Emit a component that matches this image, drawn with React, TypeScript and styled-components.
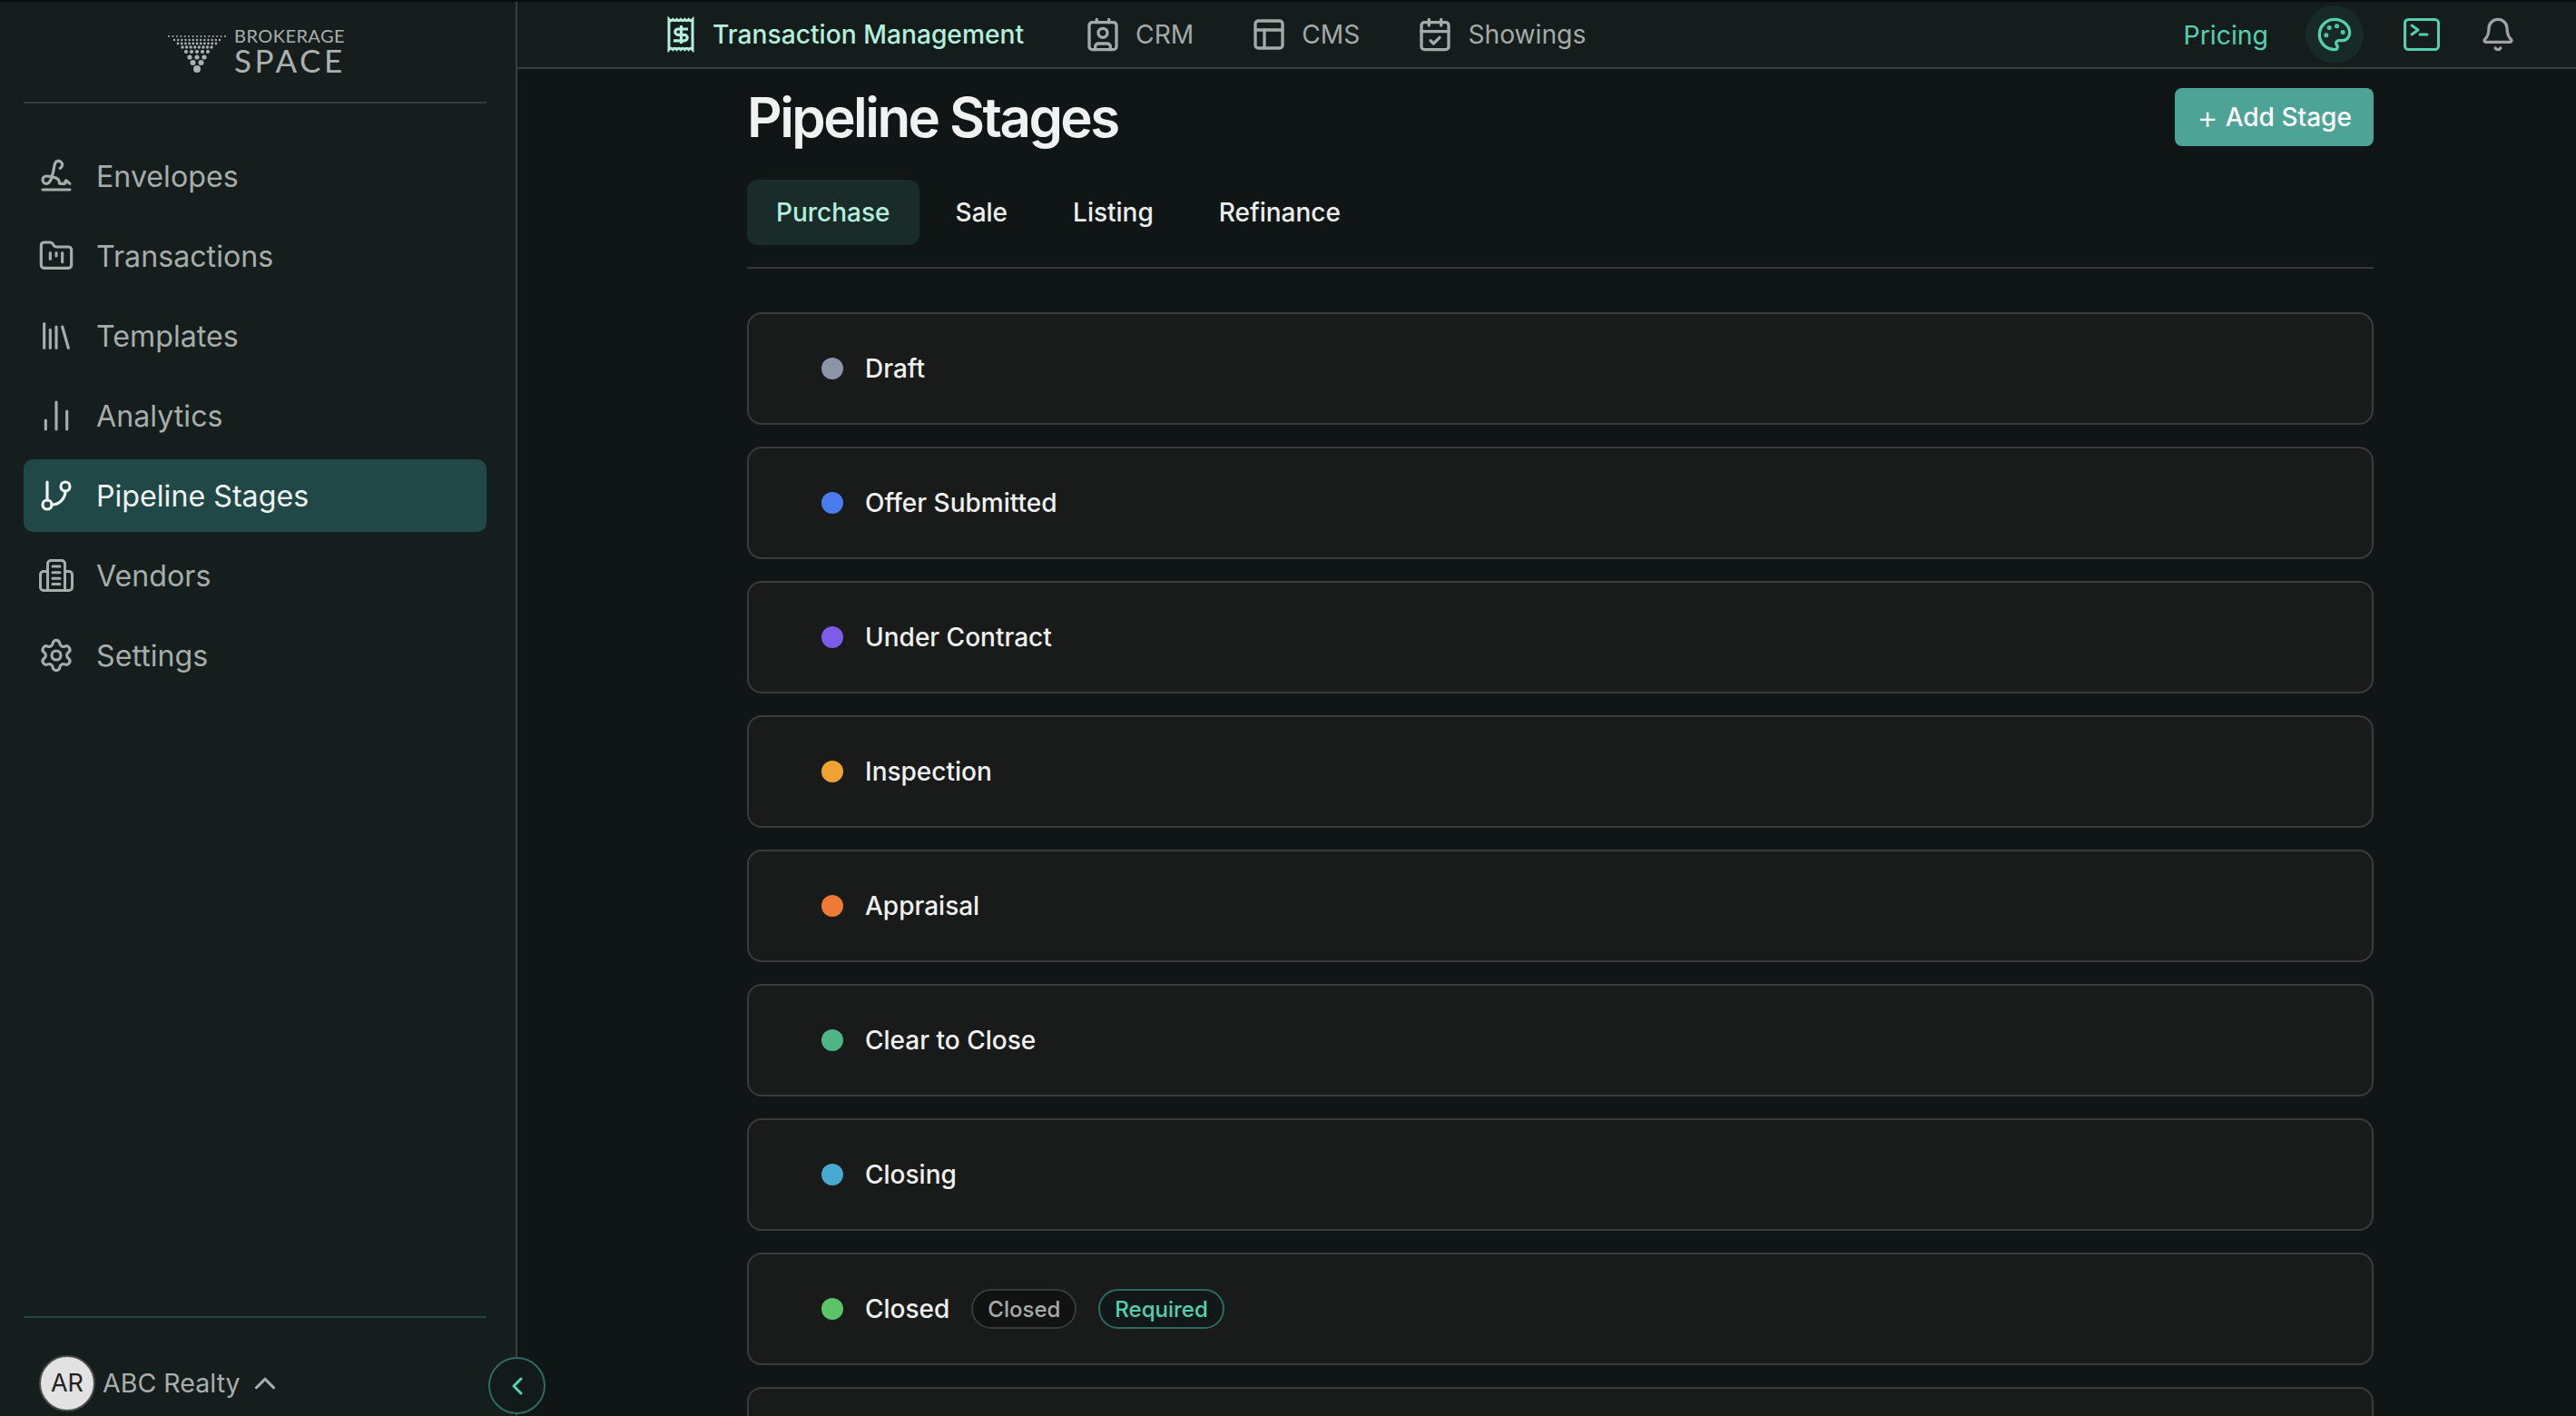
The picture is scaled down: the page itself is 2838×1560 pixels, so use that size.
import React from 'react';
import styled, { createGlobalStyle } from 'styled-components';
import {
  Signature, FolderKanban, Library, ChartNoAxesColumn, GitBranch, Settings,
  Contact, PanelsTopLeft, CalendarCheck, Palette, Bell, ChevronUp, ChevronLeft,
} from 'lucide-react';

const GlobalStyle = createGlobalStyle`
  html, body { margin: 0; padding: 0; height: 100%; background: #101616; }
  body { font-family: Inter, "Noto Sans", sans-serif; overflow: hidden; }
`;

const Shell = styled.div`
  display: flex;
  height: 100vh;
  padding-top: 2px;
  box-sizing: border-box;
  background: #0a0d0d;
  overflow: hidden;
`;

const Sidebar = styled.aside`
  position: relative;
  width: 570px;
  flex: none;
  box-sizing: border-box;
  display: flex;
  flex-direction: column;
  background: #151d1d;
  border-right: 2px solid #3a3d3d;
`;

const LogoRow = styled.div`
  height: 112px;
  margin: 0 32px 0 26px;
  box-sizing: border-box;
  border-bottom: 2px solid #383c3c;
  display: flex;
  align-items: flex-start;
  padding: 27px 0 0 159px;
  gap: 9px;
`;

const LogoWords = styled.div`
  display: flex;
  flex-direction: column;
  color: #aab1af;
  font-family: Lato, sans-serif;
  font-weight: 400;
`;

const LogoTop = styled.span`
  font-size: 20px;
  line-height: 21px;
  letter-spacing: 0.45px;
`;

const LogoBottom = styled.span`
  font-size: 35px;
  line-height: 32px;
  letter-spacing: 3.6px;
  white-space: nowrap;
`;

const Nav = styled.nav`
  flex: 1;
  display: flex;
  flex-direction: column;
  gap: 8px;
  margin: 40px 32px 0 26px;
`;

const NavItem = styled.div<{ $active?: boolean }>`
  height: 80px;
  display: flex;
  align-items: center;
  gap: 24px;
  padding-left: 16px;
  border-radius: 10px;
  font-size: 32.2px;
  color: ${(p) => (p.$active ? '#eff3f2' : '#a6adab')};
  background: ${(p) => (p.$active ? '#204846' : 'transparent')};
  svg { flex: none; }
`;

const SideFooter = styled.div`
  height: 110px;
  margin: 0 32px 0 26px;
  box-sizing: border-box;
  border-top: 2px solid #23483f;
  display: flex;
  align-items: center;
  padding: 35px 0 0 17px;
  gap: 8px;
  color: #a9adac;
  font-size: 28.6px;
`;

const Avatar = styled.div`
  width: 62px;
  height: 62px;
  flex: none;
  box-sizing: border-box;
  border-radius: 50%;
  background: #e2e2e2;
  border: 2px solid #4a4d4d;
  color: #222;
  font-size: 27px;
  display: flex;
  align-items: center;
  justify-content: center;
`;

const CollapseButton = styled.div`
  position: absolute;
  right: -33px;
  bottom: 2px;
  width: 63px;
  height: 63px;
  box-sizing: border-box;
  border-radius: 50%;
  background: #121a1a;
  border: 2px solid #2e6a60;
  color: #52d6b2;
  display: flex;
  align-items: center;
  justify-content: center;
  z-index: 2;
`;

const Main = styled.div`
  flex: 1;
  min-width: 0;
  display: flex;
  flex-direction: column;
`;

const TopBar = styled.header`
  height: 74px;
  flex: none;
  box-sizing: border-box;
  display: flex;
  align-items: center;
  background: #151c1c;
  border-bottom: 2px solid #3a3d3d;
  padding: 0 66px 0 160px;
`;

const TopItem = styled.div<{ $active?: boolean }>`
  display: flex;
  align-items: center;
  gap: ${(p) => (p.$active ? 15 : 16)}px;
  margin-right: ${(p) => (p.$active ? 67 : 63)}px;
  font-size: 28.2px;
  font-weight: ${(p) => (p.$active ? 500 : 400)};
  color: ${(p) => (p.$active ? '#b4efdc' : '#a3aaa8')};
`;

const TopRight = styled.div`
  margin-left: auto;
  display: flex;
  align-items: center;
`;

const PricingLink = styled.span`
  color: #55d0ae;
  font-size: 28.4px;
  margin-right: 41px;
`;

const PaletteButton = styled.div`
  width: 64px;
  height: 64px;
  border-radius: 50%;
  background: #172a28;
  color: #55d0ae;
  display: flex;
  align-items: center;
  justify-content: center;
  margin-right: 44px;
`;

const TerminalWrap = styled.div`
  display: flex;
  color: #55d0ae;
`;

const BellWrap = styled.div`
  display: flex;
  margin-left: 44px;
  color: #a0a1a6;
`;

const Content = styled.main`
  flex: 1;
  min-height: 0;
  overflow: hidden;
  padding: 21px 223px 0 253px;
  background: #101616;
`;

const HeaderRow = styled.div`
  display: flex;
  align-items: center;
  justify-content: space-between;
  height: 64px;
`;

const Title = styled.h1`
  margin: 0;
  font-size: 60px;
  font-weight: 600;
  letter-spacing: -2.55px;
  color: #f0f2f2;
`;

const AddButton = styled.button`
  width: 219px;
  height: 64px;
  border: none;
  border-radius: 8px;
  background: #4da396;
  color: #fff;
  font-family: inherit;
  font-size: 28px;
  font-weight: 500;
  display: flex;
  align-items: center;
  justify-content: center;
  gap: 8px;
  padding: 0;
`;

const PlusSign = styled.span`
  font-size: 36px;
  font-weight: 300;
  line-height: 36px;
`;

const Tabs = styled.div`
  display: flex;
  gap: 8px;
  margin-top: 37px;
  padding-bottom: 24px;
  border-bottom: 2px solid #363939;
`;

const Tab = styled.div<{ $active?: boolean }>`
  height: 72px;
  padding: 0 32px;
  display: flex;
  align-items: center;
  border-radius: 12px;
  font-size: 28px;
  font-weight: 450;
  color: ${(p) => (p.$active ? '#b4efdc' : '#eceeee')};
  background: ${(p) => (p.$active ? '#1a2c2a' : 'transparent')};
`;

const StageList = styled.div`
  display: flex;
  flex-direction: column;
  gap: 24px;
  margin-top: 48px;
`;

const StageCard = styled.div`
  height: 124px;
  flex: none;
  box-sizing: border-box;
  display: flex;
  align-items: center;
  padding-left: 80px;
  background: #191a1a;
  border: 2px solid #3a3c3c;
  border-radius: 16px;
`;

const Dot = styled.span<{ $color: string }>`
  width: 24px;
  height: 24px;
  flex: none;
  border-radius: 50%;
  background: ${(p) => p.$color};
  margin-right: 24px;
`;

const StageName = styled.span`
  font-size: 28px;
  font-weight: 450;
  color: #eff1f1;
`;

const Badge = styled.span<{ $teal?: boolean }>`
  height: 44px;
  box-sizing: border-box;
  display: inline-flex;
  align-items: center;
  padding: 0 16px;
  margin-left: 24px;
  border-radius: 22px;
  font-size: 24px;
  font-weight: 500;
  background: ${(p) => (p.$teal ? '#121818' : '#111313')};
  color: ${(p) => (p.$teal ? '#55d0ae' : '#a8abaa')};
  border: 2px solid ${(p) => (p.$teal ? '#2e6a60' : '#383a3a')};
`;

const BrokerageMark = () => {
  const rows = [
    { y: 3, n: 15, w: 31, r: 1 },
    { y: 7, n: 13, w: 25, r: 1.2 },
    { y: 11, n: 11, w: 21, r: 1.4 },
    { y: 15, n: 8, w: 16, r: 1.7 },
    { y: 20, n: 5, w: 12, r: 2.1 },
    { y: 26, n: 3, w: 8, r: 2.6 },
    { y: 32, n: 2, w: 4.5, r: 3 },
    { y: 39, n: 1, w: 0, r: 4 },
  ];
  const dots: React.ReactNode[] = [];
  rows.forEach((row) => {
    for (let i = 0; i < row.n; i++) {
      const x = row.n === 1 ? 32 : 32 - row.w + (2 * row.w * i) / (row.n - 1);
      dots.push(<circle key={`${row.y}-${i}`} cx={x} cy={row.y} r={row.r} />);
    }
  });
  return (
    <svg width="64" height="44" viewBox="0 0 64 44" fill="#aab1af" style={{ marginTop: 8 }}>
      {dots}
    </svg>
  );
};

const ReceiptIcon = () => (
  <svg width="40" height="40" viewBox="0 0 40 40" fill="none" stroke="currentColor" strokeWidth="3">
    <path d="M7 3.5 q2 2.4 4.3 0 q2 2.4 4.3 0 q2.2 2.4 4.4 0 q2.2 2.4 4.4 0 q2.2 2.4 4.3 0 q2 2.4 4.3 0 V36.5 q-2 -2.4 -4.3 0 q-2.1 -2.4 -4.3 0 q-2.2 -2.4 -4.4 0 q-2.2 -2.4 -4.4 0 q-2.2 -2.4 -4.3 0 q-2.3 -2.4 -4.3 0 Z" />
    <path d="M28 14 h-11 a3.2 3.2 0 0 0 0 6.4 h7 a3.2 3.2 0 0 1 0 6.4 h-12 M20.5 10 v20" strokeWidth="3.2" />
  </svg>
);

const TerminalIcon = () => (
  <svg width="40" height="36" viewBox="0 0 40 36" fill="none" stroke="currentColor" strokeWidth="3" strokeLinecap="round" strokeLinejoin="round">
    <rect x="1.5" y="1.5" width="37" height="33" rx="4" />
    <path d="M9 8 l7 5 l-7 5 M18 18 h8" />
  </svg>
);

const VendorsIcon = () => (
  <svg width="40" height="40" viewBox="0 0 40 40" fill="none" stroke="currentColor" strokeWidth="3" strokeLinecap="round" strokeLinejoin="round">
    <path d="M10.5 36.5 V7 a3.5 3.5 0 0 1 3.5 -3.5 h12 a3.5 3.5 0 0 1 3.5 3.5 V36.5" />
    <path d="M10.5 15.5 H6 a3.5 3.5 0 0 0 -3.5 3.5 V33 A3.5 3.5 0 0 0 6 36.5 H34 a3.5 3.5 0 0 0 3.5 -3.5 V19 A3.5 3.5 0 0 0 34 15.5 H29.5" />
    <path d="M16 10 h8 M16 16.7 h8 M16 23.3 h8 M16 29.5 h8" />
  </svg>
);

const sideItems = [
  { label: 'Envelopes', icon: <Signature size={40} strokeWidth={1.9} /> },
  { label: 'Transactions', icon: <FolderKanban size={40} strokeWidth={1.9} /> },
  { label: 'Templates', icon: <Library size={40} strokeWidth={1.9} /> },
  { label: 'Analytics', icon: <ChartNoAxesColumn size={40} strokeWidth={1.9} /> },
  { label: 'Pipeline Stages', icon: <GitBranch size={40} strokeWidth={1.9} />, active: true },
  { label: 'Vendors', icon: <VendorsIcon /> },
  { label: 'Settings', icon: <Settings size={40} strokeWidth={1.9} /> },
];

const stages = [
  { name: 'Draft', color: '#8b94a8' },
  { name: 'Offer Submitted', color: '#4a7cf0' },
  { name: 'Under Contract', color: '#7c5ce8' },
  { name: 'Inspection', color: '#f0a233' },
  { name: 'Appraisal', color: '#ee7a35' },
  { name: 'Clear to Close', color: '#4fb584' },
  { name: 'Closing', color: '#47a9d0' },
  { name: 'Closed', color: '#5cc466', badges: true },
];

const App: React.FC = () => {
  return (
    <Shell>
      <GlobalStyle />
      <Sidebar>
        <LogoRow>
          <BrokerageMark />
          <LogoWords>
            <LogoTop>BROKERAGE</LogoTop>
            <LogoBottom>SPACE</LogoBottom>
          </LogoWords>
        </LogoRow>
        <Nav>
          {sideItems.map((item) => (
            <NavItem key={item.label} $active={item.active}>
              {item.icon}
              {item.label}
            </NavItem>
          ))}
        </Nav>
        <SideFooter>
          <Avatar>AR</Avatar>
          ABC Realty
          <ChevronUp size={38} strokeWidth={2} />
        </SideFooter>
        <CollapseButton>
          <ChevronLeft size={32} strokeWidth={2.2} />
        </CollapseButton>
      </Sidebar>
      <Main>
        <TopBar>
          <TopItem $active>
            <ReceiptIcon />
            Transaction Management
          </TopItem>
          <TopItem>
            <Contact size={40} strokeWidth={2} />
            CRM
          </TopItem>
          <TopItem>
            <PanelsTopLeft size={40} strokeWidth={2} />
            CMS
          </TopItem>
          <TopItem>
            <CalendarCheck size={40} strokeWidth={2} />
            Showings
          </TopItem>
          <TopRight>
            <PricingLink>Pricing</PricingLink>
            <PaletteButton>
              <Palette size={40} strokeWidth={2} />
            </PaletteButton>
            <TerminalWrap>
              <TerminalIcon />
            </TerminalWrap>
            <BellWrap>
              <Bell size={40} strokeWidth={2} />
            </BellWrap>
          </TopRight>
        </TopBar>
        <Content>
          <HeaderRow>
            <Title>Pipeline Stages</Title>
            <AddButton>
              <PlusSign>+</PlusSign>
              <span>Add Stage</span>
            </AddButton>
          </HeaderRow>
          <Tabs>
            <Tab $active>Purchase</Tab>
            <Tab>Sale</Tab>
            <Tab>Listing</Tab>
            <Tab>Refinance</Tab>
          </Tabs>
          <StageList>
            {stages.map((s) => (
              <StageCard key={s.name}>
                <Dot $color={s.color} />
                <StageName>{s.name}</StageName>
                {s.badges && (
                  <>
                    <Badge>Closed</Badge>
                    <Badge $teal>Required</Badge>
                  </>
                )}
              </StageCard>
            ))}
            <StageCard />
          </StageList>
        </Content>
      </Main>
    </Shell>
  );
};

export default App;
